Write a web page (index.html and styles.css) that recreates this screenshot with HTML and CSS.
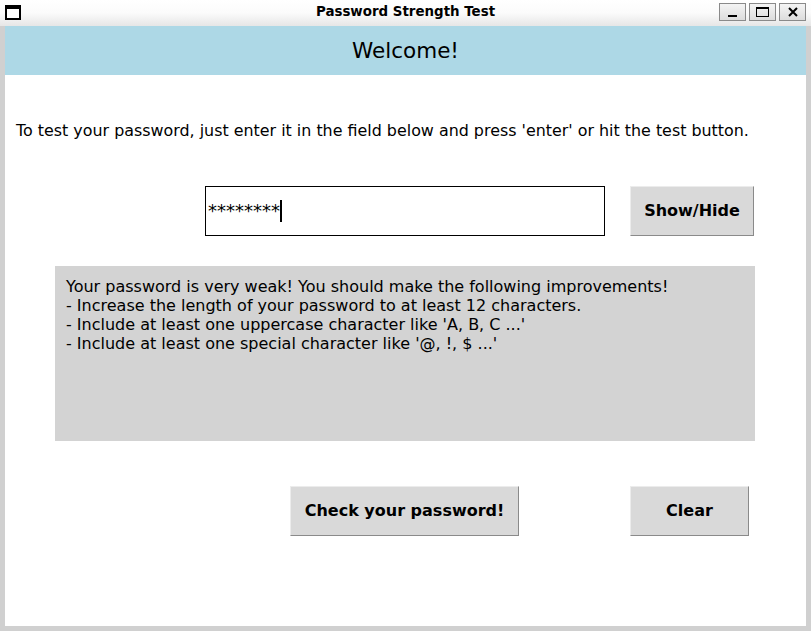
FILE: index.html
```html
<!DOCTYPE html>
<html>
<head>
<meta charset="utf-8">
<link rel="stylesheet" href="styles.css">
</head>
<body>
<div class="window">
  <div class="titlebar">
    <div class="winicon"></div>
    <div class="title">Password Strength Test</div>
    <div class="controls">
      <div class="ctl"><span class="min"></span></div>
      <div class="ctl"><span class="max"></span></div>
      <div class="ctl"><svg width="12" height="12" viewBox="0 0 12 12"><path d="M2 2 L10 10 M10 2 L2 10" stroke="#000" stroke-width="2"/></svg></div>
    </div>
  </div>
  <div class="frame">
    <div class="header">Welcome!</div>
    <p class="intro">To test your password, just enter it in the field below and press 'enter' or hit the test button.</p>
    <div class="row pwrow">
      <div class="pwfield"><span>********</span><span class="caret"></span></div>
      <div class="btn showhide">Show/Hide</div>
    </div>
    <div class="msg">Your password is very weak! You should make the following improvements!<br>- Increase the length of your password to at least 12 characters.<br>- Include at least one uppercase character like 'A, B, C ...'<br>- Include at least one special character like '@, !, $ ...'</div>
    <div class="row actions">
      <div class="btn check">Check your password!</div>
      <div class="btn clear">Clear</div>
    </div>
  </div>
</div>
</body>
</html>
```
FILE: styles.css
```css
* { box-sizing: border-box; }
html, body { margin: 0; padding: 0; background: #d0d0d0; }
body { font-family: "DejaVu Sans", sans-serif; color: #000; }
.window { width: 811px; height: 631px; display: flex; flex-direction: column; }
.titlebar {
  height: 26px; display: flex; align-items: center; position: relative;
  background: linear-gradient(#ffffff 0%, #fbfbfb 50%, #e6e6e6 100%);
}
.winicon {
  width: 16px; height: 15px; margin-left: 5px; margin-top: -1px;
  border: 2px solid #000; border-top-width: 4px; background: #fff;
}
.title {
  position: absolute; left: 0; right: 0; top: 4px; text-align: center;
  font-weight: bold; font-size: 13.4px; pointer-events: none;
}
.controls { margin-left: auto; margin-right: 5px; display: flex; gap: 3px; margin-top: -2px; }
.ctl {
  width: 27px; height: 18px; border: 1px solid #8a8a8a; background: linear-gradient(#f4f4f4, #dcdcdc);
  display: flex; align-items: center; justify-content: center;
}
.min { width: 9px; height: 2px; background: #000; margin-top: 7px; }
.max { width: 13px; height: 10px; border: 1px solid #000; border-top-width: 2px; }
.frame {
  flex: 1; background: #fff; margin: 0 5px 5px 5px;
  display: flex; flex-direction: column;
}
.header {
  height: 49px; background: #add8e6; text-align: center; font-size: 21.5px;
  line-height: 49px;
}
.intro { margin: 46px 0 0 11px; font-size: 15.9px; line-height: 20px; }
.row { display: flex; }
.pwrow { margin-top: 45px; padding-left: 200px; gap: 25px; }
.pwfield {
  width: 400px; height: 50px; border: 1px solid #000; display: flex; align-items: center;
  padding-left: 2px; font-size: 18px; line-height: 20px;
}
.caret { width: 2px; height: 22px; background: #000; margin-left: 0; }
.btn {
  height: 50px; background: #d9d9d9; display: flex; align-items: center; justify-content: center;
  font-weight: bold; font-size: 16px; padding-bottom: 2px;
  border: 1px solid; border-color: #ececec #8a8a8a #8a8a8a #ececec;
}
.showhide { width: 124px; }
.msg {
  margin: 30px 0 0 50px; width: 700px; height: 175px; background: #d3d3d3;
  padding: 11px 11px; font-size: 16px; line-height: 19px;
}
.actions { margin-top: 45px; padding-left: 285px; gap: 111px; }
.check { width: 229px; }
.clear { width: 119px; }
```
